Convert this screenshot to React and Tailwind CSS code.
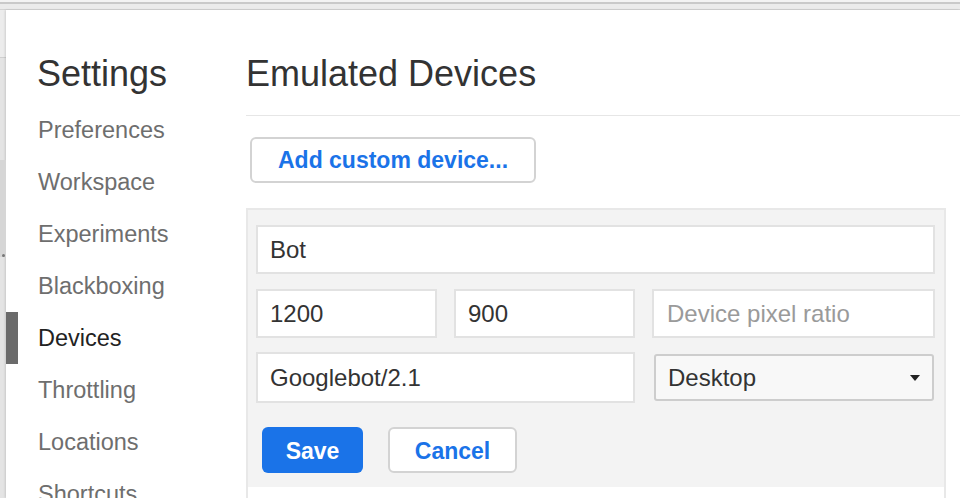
import React from "react";

const items = [
  "Preferences",
  "Workspace",
  "Experiments",
  "Blackboxing",
  "Devices",
  "Throttling",
  "Locations",
  "Shortcuts",
];

export default function App() {
  return (
    <div
      className="w-[960px] h-[498px] overflow-hidden bg-[#e6e6e6] flex flex-col"
      style={{ fontFamily: '"Liberation Sans", Arial, sans-serif' }}
    >
      {/* top chrome strip */}
      <div className="h-[10px] shrink-0 flex flex-col">
        <div className="h-[2px] bg-[#f3f3f3]" />
        <div className="h-[2px] bg-[#c9c9c9]" />
        <div className="h-[5px] bg-[#ebebeb]" />
        <div className="h-[1px] bg-[#d4d4d4]" />
      </div>
      <div className="flex flex-1 min-h-0">
        {/* left strip */}
        <div className="w-[6px] shrink-0 flex flex-col bg-[#e4e4e4]">
          <div className="h-[47px] bg-[#ececec]" />
          <div className="h-[1px] bg-[#cfcfcf]" />
          <div className="h-[102px]" />
          <div className="h-[97px] bg-[#d6d6d6] relative">
            <span className="absolute left-[2px] bottom-[0px] w-[3px] h-[3px] rounded-full bg-[#777]" />
          </div>
          <div className="flex-1" />
        </div>
        {/* dialog */}
        <div className="flex-1 bg-white flex shadow-[-1px_0_2px_rgba(0,0,0,0.12)]">
          {/* sidebar */}
          <div className="w-[240px] shrink-0 pt-[46px] flex flex-col">
            <div className="pl-[31px] h-[36px] leading-[36px] text-[36px] text-[#333] mb-[12px]">
              Settings
            </div>
            {items.map((it) => (
              <div key={it} className="h-[52px] flex items-center relative shrink-0">
                {it === "Devices" && (
                  <div className="absolute left-0 top-0 w-[12px] h-[52px] bg-[#6b6b6b]" />
                )}
                <span
                  className={
                    "pl-[32px] text-[23.5px] leading-[28px] " +
                    (it === "Devices" ? "text-[#222]" : "text-[#6e6e6e]")
                  }
                >
                  {it}
                </span>
              </div>
            ))}
          </div>
          {/* content */}
          <div className="flex-1 pt-[46px] flex flex-col">
            <div className="h-[36px] leading-[36px] text-[36px] text-[#333] mb-[23px]">
              Emulated Devices
            </div>
            <div className="h-[1px] bg-[#e6e6e6]" />
            <div className="pl-[4px] mt-[21px]">
              <button className="w-[286px] h-[46px] rounded-[6px] border-2 border-[#d3d3d3] bg-white text-[#1a73e8] text-[23px] font-bold">
                Add custom device...
              </button>
            </div>
            <div className="mt-[25px] w-[700px] flex-1 border-x-2 border-t-2 border-[#e8e8e8] flex flex-col">
              <div className="bg-[#f3f3f3] pl-[8px] pr-[9px] pt-[15px] pb-[14px] flex flex-col">
                <div className="h-[49px] border-2 border-[#e2e2e2] bg-white flex items-center pl-[12px] text-[24px] text-[#333]">
                  Bot
                </div>
                <div className="mt-[15px] flex gap-[17px]">
                  <div className="w-[181px] h-[49px] border-2 border-[#e2e2e2] bg-white flex items-center pl-[12px] text-[24px] text-[#333]">
                    1200
                  </div>
                  <div className="w-[181px] h-[49px] border-2 border-[#e2e2e2] bg-white flex items-center pl-[12px] text-[24px] text-[#333]">
                    900
                  </div>
                  <div className="flex-1 h-[49px] border-2 border-[#e2e2e2] bg-white flex items-center pl-[13px] text-[24px] text-[#9a9a9a]">
                    Device pixel ratio
                  </div>
                </div>
                <div className="mt-[14px] flex items-center gap-[19px]">
                  <div className="w-[379px] h-[51px] border-2 border-[#e2e2e2] bg-white flex items-center pl-[12px] text-[24px] text-[#333]">
                    Googlebot/2.1
                  </div>
                  <div className="flex-1 mr-[1px] h-[47px] border-2 border-[#cdcdcd] rounded-[3px] bg-[#f8f8f8] flex items-center pl-[12px] pr-[12px] text-[24px] text-[#333]">
                    <span className="flex-1">Desktop</span>
                    <svg width="10" height="6" viewBox="0 0 10 6">
                      <path d="M0 0 L10 0 L5 6 Z" fill="#222" />
                    </svg>
                  </div>
                </div>
                <div className="mt-[24px] pl-[6px] flex gap-[25px]">
                  <button className="w-[101px] h-[46px] pt-[3px] rounded-[6px] bg-[#1a73e8] text-white text-[23px] font-bold">
                    Save
                  </button>
                  <button className="w-[129px] h-[46px] pt-[3px] rounded-[6px] border-2 border-[#d3d3d3] bg-white text-[#1a73e8] text-[23px] font-bold">
                    Cancel
                  </button>
                </div>
              </div>
              <div className="flex-1 bg-white" />
            </div>
          </div>
        </div>
      </div>
    </div>
  );
}
